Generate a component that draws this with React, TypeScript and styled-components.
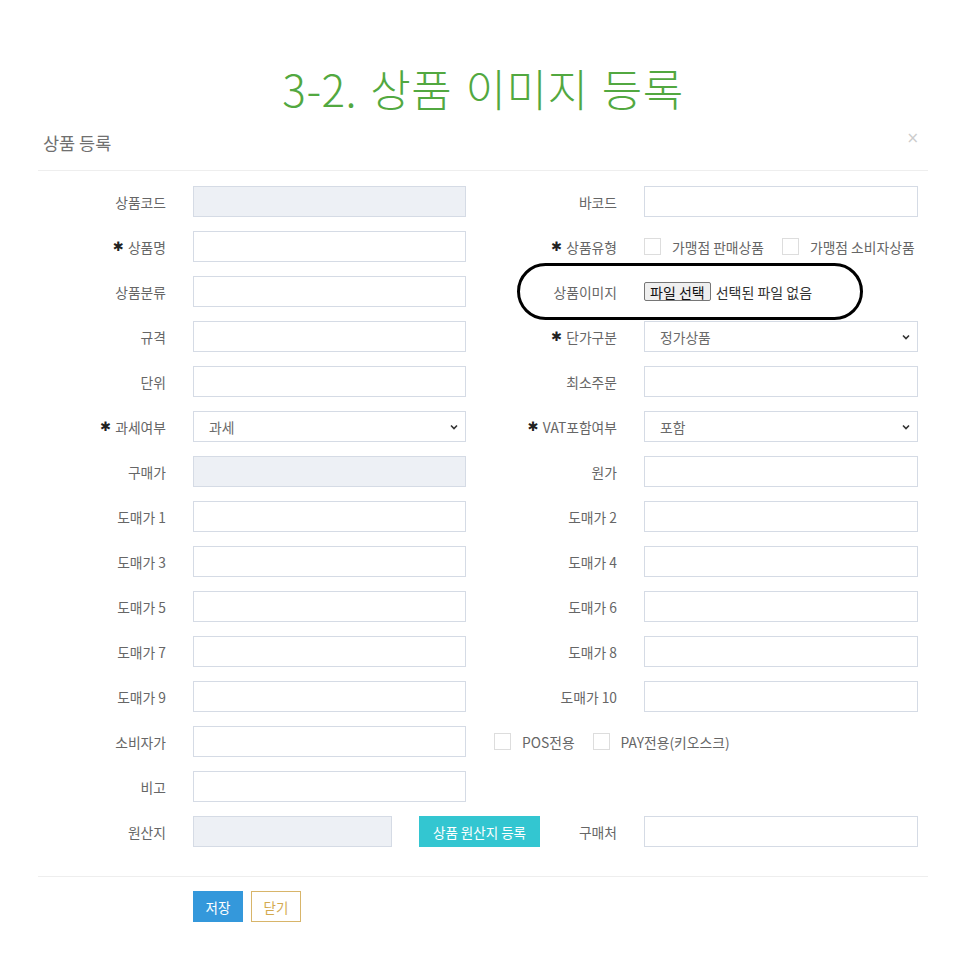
import React from "react";
import styled, { createGlobalStyle } from "styled-components";

const GlobalStyle = createGlobalStyle`
  html, body { margin: 0; padding: 0; background: #fff; }
  body { font-family: "Noto Sans CJK KR", "Noto Sans", sans-serif; color: #555; }
  * { box-sizing: border-box; }
`;

const Page = styled.div`
  width: 966px;
  min-height: 966px;
  background: #fff;
`;

const Title = styled.h1`
  margin: 0;
  padding-top: 62px;
  height: 115px;
  text-align: center;
  font-family: "Noto Sans CJK KR", "Noto Sans", sans-serif;
  font-weight: 300;
  font-size: 44px;
  line-height: 53px;
  letter-spacing: 0.5px;
  word-spacing: 3px;
  color: #52a840;
`;

const Modal = styled.div`
  margin: 0 38px;
  width: 890px;
`;

const Header = styled.div`
  height: 56px;
  display: flex;
  align-items: center;
  justify-content: space-between;
  padding: 0 9px 0 5px;
  border-bottom: 1px solid #eeeeee;
`;

const HeaderTitle = styled.span`
  font-size: 17.5px;
  color: #707070;
`;

const Close = styled.span`
  font-family: "DejaVu Sans", sans-serif;
  font-size: 15px;
  color: #ccc;
  margin-top: -10px;
`;

const Body = styled.div`
  display: flex;
  flex-direction: column;
  gap: 14px;
  padding: 15px 0 29px 0;
  border-bottom: 1px solid #eeeeee;
`;

const Row = styled.div`
  position: relative;
  display: grid;
  grid-template-columns: 128px 273px 124px 274px;
  column-gap: 27px;
  height: 31px;
`;

const Label = styled.label`
  display: flex;
  align-items: center;
  justify-content: flex-end;
  font-size: 13.8px;
  color: #666;
  white-space: nowrap;
`;

const Star = styled.span`
  color: #222;
  font-family: "DejaVu Sans", sans-serif;
  font-size: 13px;
  margin-right: 4px;
`;

const Input = styled.input<{ $w?: number }>`
  width: ${(p) => (p.$w ? `${p.$w}px` : "100%")};
  height: 31px;
  border: 1px solid #d5dbe5;
  background: ${(p) => (p.disabled ? "#edf0f5" : "#fff")};
  padding: 0 12px;
  font-family: inherit;
  font-size: 13px;
  outline: none;
`;

const SelectBox = styled.div`
  height: 31px;
  border: 1px solid #d5dbe5;
  background: #fff;
  display: flex;
  align-items: center;
  justify-content: space-between;
  padding: 0 6px 0 15px;
  font-size: 13.8px;
  color: #6a6a6a;
`;

const CheckGroup = styled.div<{ $span?: boolean }>`
  display: flex;
  align-items: center;
  grid-column: ${(p) => (p.$span ? "3 / span 2" : "auto")};
  padding-left: ${(p) => (p.$span ? "1px" : "0")};
`;

const CheckItem = styled.label`
  display: flex;
  align-items: center;
  font-size: 13.8px;
  color: #666;
  margin-right: 18px;
  white-space: nowrap;
`;

const CheckBox = styled.span`
  width: 17px;
  height: 17px;
  border: 1px solid #dddddd;
  background: #fff;
  margin-right: 11px;
  flex: none;
`;

const FileCell = styled.div`
  display: flex;
  align-items: center;
  font-size: 14px;
  color: #333;
`;

const FileButton = styled.span`
  display: inline-flex;
  align-items: center;
  height: 19px;
  padding: 0 5px;
  border: 1px solid #767676;
  border-radius: 2px;
  background: #efefef;
  color: #111;
  font-size: 14px;
  margin-right: 5px;
`;

const Oval = styled.div`
  position: absolute;
  left: 479px;
  top: -13px;
  width: 346px;
  height: 57px;
  border: 3px solid #000;
  border-radius: 29px;
  pointer-events: none;
`;

const OriginCell = styled.div`
  grid-column: 2 / span 2;
  display: flex;
  align-items: center;
`;

const PushLabel = styled(Label)`
  margin-left: auto;
  height: 31px;
`;

const Button = styled.button<{ $variant: "primary" | "teal" | "outline"; $w: number }>`
  width: ${(p) => p.$w}px;
  height: 31px;
  font-family: inherit;
  font-size: 13.5px;
  padding: 0;
  cursor: pointer;
  border: 1px solid
    ${(p) => (p.$variant === "primary" ? "#3498db" : p.$variant === "teal" ? "#33c6d1" : "#d8b56a")};
  background: ${(p) => (p.$variant === "primary" ? "#3498db" : p.$variant === "teal" ? "#33c6d1" : "#fff")};
  color: ${(p) => (p.$variant === "outline" ? "#d3a94f" : "#fff")};
`;

const Footer = styled.div`
  display: flex;
  gap: 8px;
  padding: 14px 0 0 155px;
`;

const Chevron = () => (
  <svg width="10" height="10" viewBox="0 0 10 10">
    <path d="M2 3.5 L5 6.5 L8 3.5" fill="none" stroke="#333" strokeWidth="1.6" />
  </svg>
);

const Req = ({ children }: { children: React.ReactNode }) => (
  <Label>
    <Star>✱</Star>
    {children}
  </Label>
);

const Select = ({ value }: { value: string }) => (
  <SelectBox>
    <span>{value}</span>
    <Chevron />
  </SelectBox>
);

const Check = ({ label }: { label: string }) => (
  <CheckItem>
    <CheckBox />
    {label}
  </CheckItem>
);

export default function App() {
  const wholesale = [
    ["도매가 1", "도매가 2"],
    ["도매가 3", "도매가 4"],
    ["도매가 5", "도매가 6"],
    ["도매가 7", "도매가 8"],
    ["도매가 9", "도매가 10"],
  ];
  return (
    <Page>
      <GlobalStyle />
      <Title>3-2. 상품 이미지 등록</Title>
      <Modal>
        <Header>
          <HeaderTitle>상품 등록</HeaderTitle>
          <Close>×</Close>
        </Header>
        <Body>
          <Row>
            <Label>상품코드</Label>
            <Input disabled />
            <Label>바코드</Label>
            <Input />
          </Row>
          <Row>
            <Req>상품명</Req>
            <Input />
            <Req>상품유형</Req>
            <CheckGroup>
              <Check label="가맹점 판매상품" />
              <Check label="가맹점 소비자상품" />
            </CheckGroup>
          </Row>
          <Row>
            <Label>상품분류</Label>
            <Input />
            <Label>상품이미지</Label>
            <FileCell>
              <FileButton>파일 선택</FileButton>
              선택된 파일 없음
            </FileCell>
            <Oval />
          </Row>
          <Row>
            <Label>규격</Label>
            <Input />
            <Req>단가구분</Req>
            <Select value="정가상품" />
          </Row>
          <Row>
            <Label>단위</Label>
            <Input />
            <Label>최소주문</Label>
            <Input />
          </Row>
          <Row>
            <Req>과세여부</Req>
            <Select value="과세" />
            <Req>VAT포함여부</Req>
            <Select value="포함" />
          </Row>
          <Row>
            <Label>구매가</Label>
            <Input disabled />
            <Label>원가</Label>
            <Input />
          </Row>
          {wholesale.map(([a, b]) => (
            <Row key={a}>
              <Label>{a}</Label>
              <Input />
              <Label>{b}</Label>
              <Input />
            </Row>
          ))}
          <Row>
            <Label>소비자가</Label>
            <Input />
            <CheckGroup $span>
              <Check label="POS전용" />
              <Check label="PAY전용(키오스크)" />
            </CheckGroup>
          </Row>
          <Row>
            <Label>비고</Label>
            <Input />
          </Row>
          <Row>
            <Label>원산지</Label>
            <OriginCell>
              <Input disabled $w={199} />
              <Button $variant="teal" $w={121} style={{ marginLeft: 27 }}>
                상품 원산지 등록
              </Button>
              <PushLabel>구매처</PushLabel>
            </OriginCell>
            <Input />
          </Row>
        </Body>
        <Footer>
          <Button $variant="primary" $w={50}>저장</Button>
          <Button $variant="outline" $w={50}>닫기</Button>
        </Footer>
      </Modal>
    </Page>
  );
}
